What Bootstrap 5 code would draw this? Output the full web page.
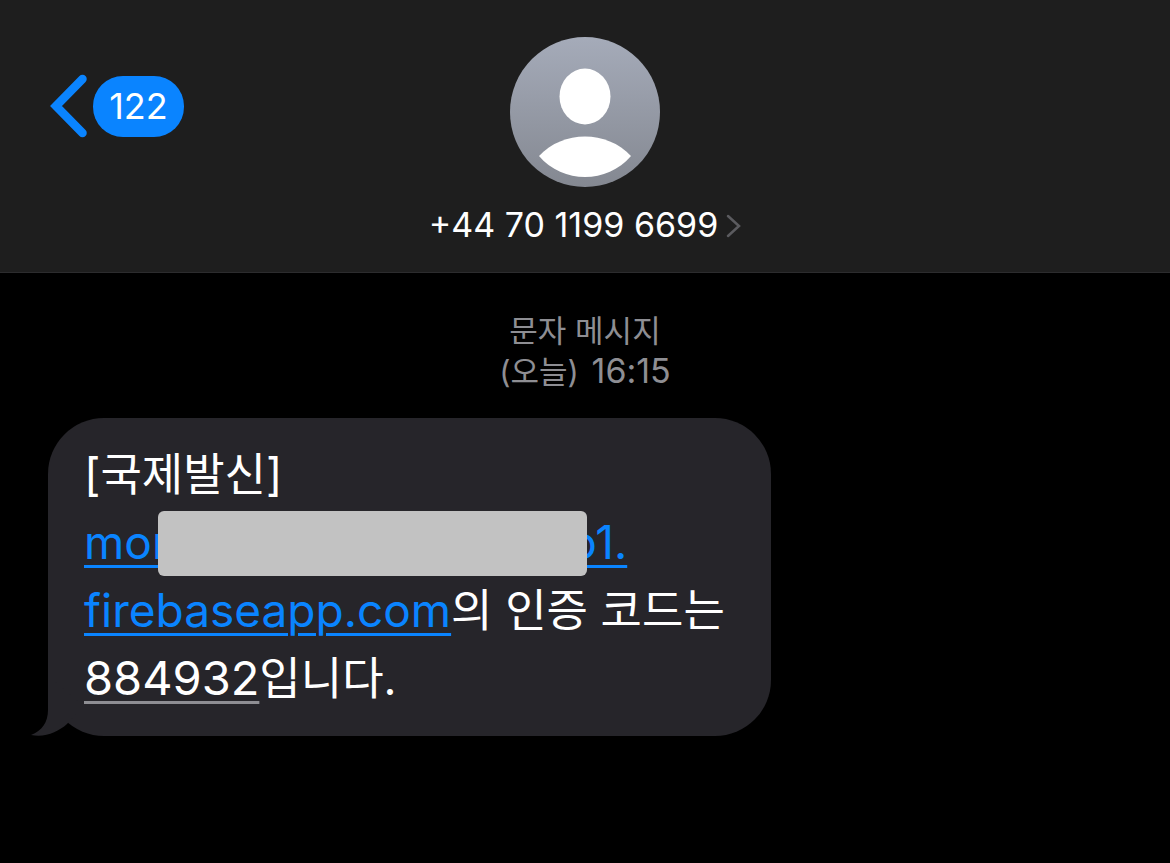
<!DOCTYPE html>
<html lang="ko" data-bs-theme="dark">
<head>
<meta charset="utf-8">
<meta name="viewport" content="width=device-width, initial-scale=1">
<title>문자 메시지</title>
<link href="https://cdn.jsdelivr.net/npm/bootstrap@5.3.0/dist/css/bootstrap.min.css" rel="stylesheet">
<style>
body { background: #000; color: #fff; font-family: Inter, "Noto Sans CJK KR", sans-serif; font-weight: 400; }
.chat-header { background: #1e1e1e; border-bottom: 1px solid #2c2c2e; padding: 37px 48px 23px; }
.back-btn { color: #0a84ff; margin-top: 37px; gap: 4px; }
.unread { background: #0a84ff; color: #fff; font-size: 36px; line-height: 61px; min-width: 91px; border-radius: 30px; }
.contact-btn { color: #fff; font-size: 34px; line-height: 48px; gap: 6px; margin-top: 14px; }
.stamp { color: #8e8e93; font-size: 31px; line-height: 40px; padding-top: 38px; }
.stamp time { font-size: 34px; }
.thread { padding: 0 48px; }
.bubble { background: #26252a; border-radius: 56px; padding: 23px 46px 23px 36px; margin-top: 26px; font-size: 45px; line-height: 68px; }
.tail { position: absolute; left: -17px; bottom: 0; }
.bubble a { color: #0a84ff; font-size: 46px; line-height: 1; text-decoration: underline; text-decoration-thickness: 3px; text-underline-offset: 6px; }
.bubble a.code { color: #fff; font-size: 47px; text-decoration-color: #8e8e93; }
.redacted { position: relative; width: 429px; height: 65px; margin: -19px -18px -13px -11px; background: #c2c2c2; border-radius: 6px; }
</style>
</head>
<body>
<header class="chat-header">
  <div class="row g-0 align-items-start">
    <div class="col">
      <button type="button" class="back-btn btn p-0 border-0 d-flex align-items-center" aria-label="뒤로">
        <svg width="41" height="64" viewBox="0 0 41 64" fill="none" stroke="currentColor" stroke-width="8.500" stroke-linecap="round" stroke-linejoin="miter"><path d="M34.500 5 8 32 34.500 59"/></svg>
        <span class="unread">122</span>
      </button>
    </div>
    <div class="col-auto d-flex flex-column align-items-center">
      <svg width="150" height="150" viewBox="0 0 150 150" role="img" aria-label="프로필">
        <defs><linearGradient id="av" x1="0" y1="0" x2="0" y2="1"><stop offset="0" stop-color="#a5abb9"/><stop offset="1" stop-color="#848891"/></linearGradient></defs>
        <circle cx="75" cy="75" r="75" fill="url(#av)"/>
        <ellipse cx="75" cy="59.500" rx="25.500" ry="28" fill="#fff"/>
        <path d="M29 119C53 93 97 93 121 119C97 147 53 147 29 119Z" fill="#fff"/>
      </svg>
      <button type="button" class="contact-btn btn p-0 border-0 d-flex align-items-center">
        <span>+44 70 1199 6699</span>
        <svg width="17" height="26" viewBox="0 0 17 26" fill="none" stroke="#5b5b5f" stroke-width="2.500" stroke-linecap="round"><path d="M4 4 15 14 4 24"/></svg>
      </button>
    </div>
    <div class="col"></div>
  </div>
</header>
<main class="thread">
  <p class="stamp text-center mb-0">문자 메시지<br>(오늘) <time class="ms-1" datetime="16:15">16:15</time></p>
  <div class="d-flex">
    <div class="bubble position-relative">
      <svg class="tail" width="60" height="60" viewBox="0 0 60 60"><path d="M17 0V34C17 46 11 55 0 59C14 62 27 56 36 48L52 30Z" fill="#26252a"/></svg>
      <div class="position-relative">[국제발신]<br><a href="#">mor<span class="redacted d-inline-block align-middle"></span>o1.<br>firebaseapp.com</a>의 인증 코드는<br><a href="#" class="code">884932</a>입니다.</div>
    </div>
  </div>
</main>
<script src="https://cdn.jsdelivr.net/npm/bootstrap@5.3.0/dist/js/bootstrap.bundle.min.js"></script>
</body>
</html>
